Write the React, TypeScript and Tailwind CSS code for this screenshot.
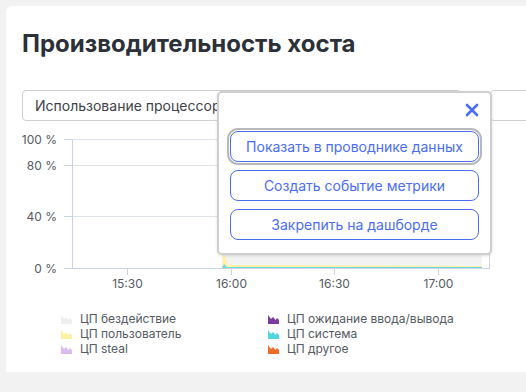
import React from "react";

const font = { fontFamily: "Inter, 'Noto Sans', sans-serif" };

function LegendIcon({ color }: { color: string }) {
  return (
    <svg width="11" height="10" viewBox="0 0 11 10" className="shrink-0">
      <path d="M0 10 L0 1 L3 5 L5 3 L7.5 6 L9 4 L11 6 L11 10 Z" fill={color} />
    </svg>
  );
}

function LegendItem({ color, label }: { color: string; label: string }) {
  return (
    <div className="flex items-center gap-[8px] h-[15px]">
      <LegendIcon color={color} />
      <span className="text-[12px] leading-[15px] text-[#555a63]">{label}</span>
    </div>
  );
}

function Chart() {
  // svg origin is at page x=6, y=130
  const ox = 6;
  const oy = 130;
  const X = (x: number) => x - ox;
  const Y = (y: number) => y - oy;
  const yTicks = [
    { y: 140, l: "100 %" },
    { y: 166, l: "80 %" },
    { y: 217, l: "40 %" },
    { y: 269, l: "0 %" },
  ];
  const xTicks = [
    { x: 127, l: "15:30" },
    { x: 231, l: "16:00" },
    { x: 334, l: "16:30" },
    { x: 438, l: "17:00" },
  ];
  return (
    <svg width="520" height="165" className="block" style={font}>
      {yTicks.map((t) => (
        <g key={t.l}>
          <line x1={X(64)} x2={X(490)} y1={Y(t.y) + 0.5} y2={Y(t.y) + 0.5} stroke="#dfe3ea" strokeWidth="1" />
          <line x1={X(64)} x2={X(72)} y1={Y(t.y) + 0.5} y2={Y(t.y) + 0.5} stroke="#c9d3e3" strokeWidth="1" />
          <text x={X(57)} y={Y(t.y) + 5} textAnchor="end" fontSize="12" fill="#555a63">
            {t.l}
          </text>
        </g>
      ))}
      {/* data area */}
      <rect x={X(222)} y={Y(255)} width={260} height={14} fill="#f3f3f3" />
      <path d={`M${X(222)} ${Y(269)} L${X(223)} ${Y(252)} L${X(225)} ${Y(257)} L${X(228)} ${Y(266)} L${X(482)} ${Y(267)} L${X(482)} ${Y(269)} Z`} fill="#fff1a6" />
      <path d={`M${X(222)} ${Y(269)} L${X(224)} ${Y(265)} L${X(227)} ${Y(268)} L${X(482)} ${Y(268)} L${X(482)} ${Y(269)} Z`} fill="#6fd8e0" />
      <line x1={X(489) + 0.5} x2={X(489) + 0.5} y1={Y(250)} y2={Y(269)} stroke="#d0d6e0" strokeWidth="1" />
      {/* axes */}
      <line x1={X(72) + 0.5} x2={X(72) + 0.5} y1={Y(140)} y2={Y(270)} stroke="#c9d3e3" strokeWidth="1" />
      <line x1={X(64)} x2={X(490)} y1={Y(269) + 0.5} y2={Y(269) + 0.5} stroke="#c9d3e3" strokeWidth="1" />
      {xTicks.map((t) => (
        <g key={t.l}>
          <line x1={X(t.x) + 0.5} x2={X(t.x) + 0.5} y1={Y(269)} y2={Y(276)} stroke="#c9d3e3" strokeWidth="1" />
          <text x={X(t.x) + 0.5} y={Y(289)} textAnchor="middle" fontSize="12" fill="#555a63">
            {t.l}
          </text>
        </g>
      ))}
    </svg>
  );
}

export default function App() {
  return (
    <div className="w-[526px] h-[392px] overflow-hidden bg-[#f2f2f2] pt-[6px] pl-[6px]" style={font}>
      <div className="relative bg-white rounded-tl-[6px] h-[366px] w-[540px]">
        <div className="pl-[16px] pt-[23px]">
          <h1 className="text-[24px] leading-[30px] font-bold text-[#2c3038]">
            Производительность хоста
          </h1>
          <div className="mt-[31px] flex">
            <div className="w-[470px] h-[31px] border border-[#cfcfcf] rounded-[4px] flex items-center pl-[12px] text-[14px] text-[#3d4149]">
              Использование процессора
            </div>
            <div className="ml-[29px] w-[60px] h-[31px] border border-[#cfcfcf] rounded-[4px]" />
          </div>
        </div>
        <div className="mt-[8px]">
          <Chart />
        </div>
        <div className="grid grid-cols-[207px_207px] pl-[55px] mt-[17px]">
          <LegendItem color="#efefef" label="ЦП бездействие" />
          <LegendItem color="#7a3aa0" label="ЦП ожидание ввода/вывода" />
          <LegendItem color="#fff0a0" label="ЦП пользователь" />
          <LegendItem color="#4fd6e2" label="ЦП система" />
          <LegendItem color="#dcbcf0" label="ЦП steal" />
          <LegendItem color="#f06a28" label="ЦП другое" />
        </div>

        {/* popover */}
        <div className="absolute left-[211px] top-[85px] w-[275px] h-[164px] bg-white border-2 border-[#cfcfcf] rounded-[5px] shadow-[0_1px_3px_rgba(0,0,0,0.12)] px-[11px]">
          <div className="flex justify-end pt-[8px] h-[38px]">
            <svg width="14" height="14" viewBox="0 0 14 14" className="mt-[2px]">
              <path d="M2 2 L12 12 M12 2 L2 12" stroke="#4a6cf7" strokeWidth="2.6" strokeLinecap="round" />
            </svg>
          </div>
          <div className="flex flex-col gap-[8px]">
            <button className="h-[31px] w-full rounded-[8px] border border-[#4a6cf7] text-[#4a6cf7] text-[14px] outline outline-2 outline-offset-[1px] outline-[#b8b8b8]">
              Показать в проводнике данных
            </button>
            <button className="h-[31px] w-full rounded-[8px] border border-[#4a6cf7] text-[#4a6cf7] text-[14px]">
              Создать событие метрики
            </button>
            <button className="h-[31px] w-full rounded-[8px] border border-[#4a6cf7] text-[#4a6cf7] text-[14px]">
              Закрепить на дашборде
            </button>
          </div>
        </div>
      </div>
    </div>
  );
}
